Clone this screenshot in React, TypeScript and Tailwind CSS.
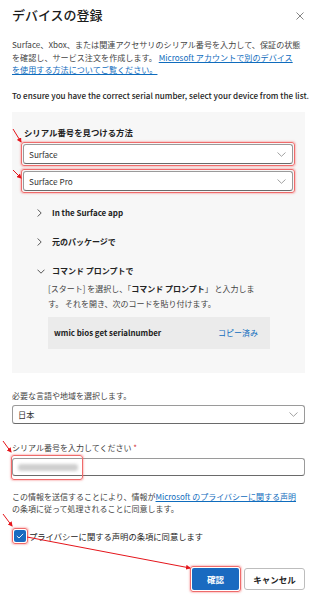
import React from "react";

function ChevronDown({ color = "#8a8a8a" }: { color?: string }) {
  return (
    <svg width="9" height="5" viewBox="0 0 9 5" className="shrink-0">
      <path d="M0.5 0.5 L4.5 4.3 L8.5 0.5" stroke={color} strokeWidth="0.8" fill="none" />
    </svg>
  );
}

function ChevronRight() {
  return (
    <svg width="5" height="8" viewBox="0 0 5 8" className="shrink-0">
      <path d="M0.7 0.5 L4.2 4 L0.7 7.5" stroke="#444" strokeWidth="0.9" fill="none" />
    </svg>
  );
}

function SmallChevronDown() {
  return (
    <svg width="8" height="5" viewBox="0 0 8 5" className="shrink-0">
      <path d="M0.5 0.7 L4 4.2 L7.5 0.7" stroke="#444" strokeWidth="0.9" fill="none" />
    </svg>
  );
}

function Select({ value, h = "h-[20px]" }: { value: string; h?: string }) {
  return (
    <div
      className={`${h} flex items-center justify-between rounded-[3px] border border-[#9a9a9a] border-b-[#6a6a6a] bg-white pl-[5px] pr-[6px]`}
    >
      <span className="text-[8.2px] leading-none text-[#333]">{value}</span>
      <ChevronDown />
    </div>
  );
}

function Highlight({ children, className = "" }: { children: React.ReactNode; className?: string }) {
  return (
    <div
      className={`rounded-[3px] border border-[#ef6b6b] p-px shadow-[0_0_1.5px_1px_rgba(240,100,100,0.35)] ${className}`}
    >
      {children}
    </div>
  );
}

function Item({ label, open = false }: { label: string; open?: boolean }) {
  return (
    <div className="flex h-[12px] items-center">
      <div className="flex w-[15px] items-center">{open ? <SmallChevronDown /> : <ChevronRight />}</div>
      <span className="text-[8px] font-semibold leading-none text-[#222]">{label}</span>
    </div>
  );
}

export default function App() {
  return (
    <div className="relative h-[600px] w-[317px] overflow-hidden bg-white font-['Noto_Sans_CJK_JP','Noto_Sans',sans-serif] text-[#333]">
      <div className="px-[12px]">
        {/* header */}
        <div className="flex items-center justify-between pt-[7px]">
          <h1 className="text-[13px] font-medium leading-[16px] text-[#1b1b1b]">デバイスの登録</h1>
          <svg width="8" height="8" viewBox="0 0 8 8" className="mr-[1px] mt-[1px]">
            <path d="M0.5 0.5 L7.5 7.5 M7.5 0.5 L0.5 7.5" stroke="#666" strokeWidth="0.8" />
          </svg>
        </div>

        <p className="mt-[16px] text-[8.1px] leading-[12.5px] text-[#444]">
          <span className="whitespace-nowrap">Surface、Xbox、または関連アクセサリのシリアル番号を入力して、保証の状態</span>
          <br />
          を確認し、サービス注文を作成します。{" "}
          <a className="text-[#0f6cbd] underline">Microsoft アカウントで別のデバイス</a>
          <br />
          <a className="text-[#0f6cbd] underline">を使用する方法についてご覧ください。</a>
        </p>

        <p className="mt-[13px] whitespace-nowrap text-[8.1px] font-medium leading-[12.5px] text-[#222]">
          To ensure you have the correct serial number, select your device from the list.
        </p>

        {/* panel */}
        <div className="mt-[10px] bg-[#f7f7f7] pb-[24px] pl-[9px] pr-[10px] pt-[14px]">
          <div className="ml-[3px] text-[8.4px] font-semibold leading-[12px] text-[#222]">シリアル番号を見つける方法</div>
          <Highlight className="mt-[4px]">
            <Select value="Surface" />
          </Highlight>
          <Highlight className="mt-[3px]">
            <Select value="Surface Pro" />
          </Highlight>

          <div className="ml-[16px] mt-[14px] flex flex-col gap-[17px]">
            <Item label="In the Surface app" />
            <Item label="元のパッケージで" />
            <Item label="コマンド プロンプトで" open />
          </div>

          <div className="ml-[27px] mt-[4px] w-[240px]">
            <p className="text-[8px] leading-[15px] text-[#444]">
              [スタート] を選択し、「<b className="font-bold text-[#222]">コマンド プロンプト</b>」 と入力しま
              <br />
              す。 それを開き、次のコードを貼り付けます。
            </p>
            <div className="mt-[6px] flex h-[32px] w-[222px] items-center justify-between bg-[#ebebeb] pl-[6px] pr-[12px]">
              <span className="text-[7.9px] font-semibold text-[#222]">wmic bios get serialnumber</span>
              <span className="text-[8px] text-[#0f6cbd]">コピー済み</span>
            </div>
          </div>
        </div>

        <div className="mt-[17px] text-[8px] leading-[12px] text-[#444]">必要な言語や地域を選択します。</div>
        <div className="mt-[3px]">
          <Select value="日本" h="h-[19px]" />
        </div>

        <div className="mt-[18px] text-[8px] leading-[12px] text-[#444]">
          シリアル番号を入力してください <span className="text-[#d13438]">*</span>
        </div>
        <div className="relative mt-[4px] h-[18px] rounded-[3px] border border-[#9a9a9a] border-b-[#6a6a6a] bg-white">
          <div className="absolute left-[5px] top-[5px] h-[7px] w-[60px] rounded-[3px] bg-[#cfcfcf] blur-[1.5px]" />
          <div className="absolute -left-[2px] -top-[4px] h-[25px] w-[72px] rounded-[3px] border border-[#ef6b6b] shadow-[0_0_1.5px_1px_rgba(240,100,100,0.35)]" />
        </div>

        <p className="mt-[15px] text-[8px] leading-[12px] text-[#444]">
          この情報を送信することにより、情報が
          <a className="text-[#0f6cbd] underline">Microsoft のプライバシーに関する声明</a>
          <br />
          の条項に従って処理されることに同意します。
        </p>

        <div className="mt-[13px] flex items-center">
          <div className="rounded-[3px] border border-[#ef6b6b] p-px shadow-[0_0_1.5px_1px_rgba(240,100,100,0.35)]">
            <div className="flex h-[12px] w-[12px] items-center justify-center rounded-[2px] bg-[#1a6ac0]">
              <svg width="8" height="6" viewBox="0 0 8 6">
                <path d="M0.8 3 L3 5 L7.2 0.8" stroke="#fff" strokeWidth="0.9" fill="none" />
              </svg>
            </div>
          </div>
          <span className="ml-px text-[8.3px] leading-none text-[#222]">プライバシーに関する声明の条項に同意します</span>
        </div>

        <div className="mt-[22px] flex justify-end gap-[3px]">
          <Highlight className="p-px">
            <button className="flex h-[22px] w-[47px] items-center justify-center rounded-[2px] bg-[#1a6ac0] text-[8.5px] font-bold text-white">
              確認
            </button>
          </Highlight>
          <button className="mt-[2px] flex h-[22px] w-[61px] items-center justify-center rounded-[3px] border border-[#bdbdbd] bg-white text-[8.5px] font-bold text-[#222]">
            キャンセル
          </button>
        </div>
      </div>

      {/* annotation arrows */}
      <svg className="pointer-events-none absolute left-0 top-0" width="317" height="600" viewBox="0 0 317 600">
        <defs>
          <marker id="ah" markerWidth="5" markerHeight="5" refX="4" refY="2.5" orient="auto" markerUnits="userSpaceOnUse">
            <path d="M0 0 L5 2.5 L0 5 Z" fill="#e5151b" />
          </marker>
        </defs>
        <g stroke="#e5151b" strokeWidth="1" fill="none" markerEnd="url(#ah)">
          <line x1="13" y1="129" x2="21" y2="142" />
          <line x1="13" y1="170" x2="21" y2="178" />
          <line x1="3" y1="441" x2="11" y2="452" />
          <line x1="3" y1="514" x2="12" y2="526" />
          <line x1="27" y1="537" x2="190" y2="568" />
        </g>
      </svg>
    </div>
  );
}
